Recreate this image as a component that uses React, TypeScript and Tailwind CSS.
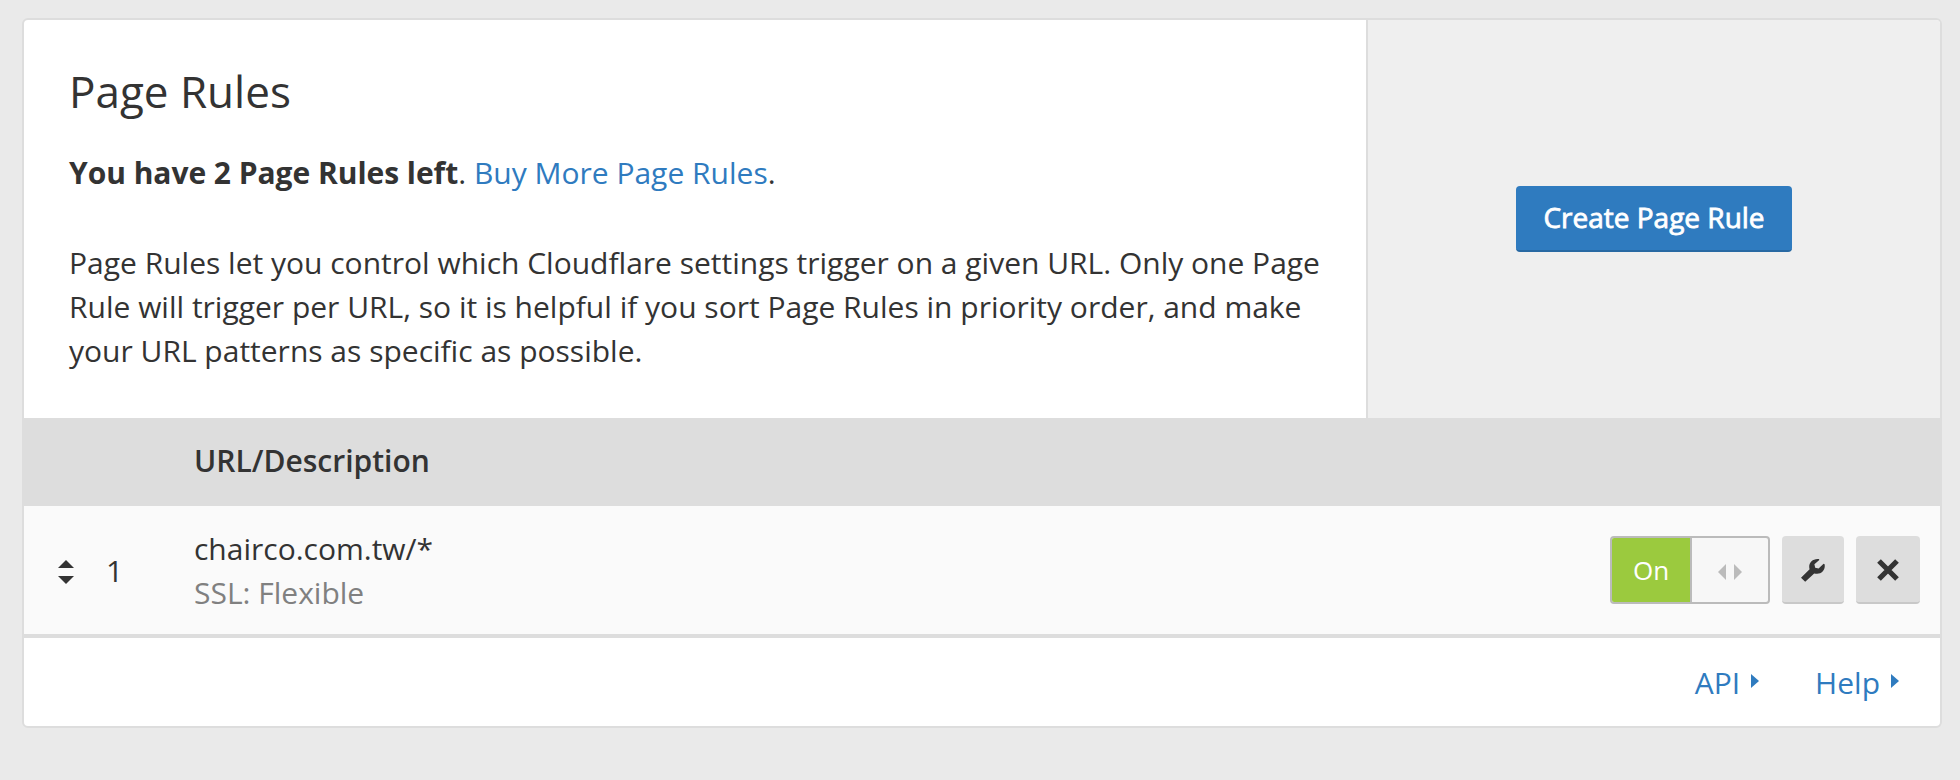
export default function App() {
  return (
    <div className="h-[780px] w-[1960px] overflow-hidden bg-[#eaeaea] px-[22px] pt-[18px] font-['Open_Sans',sans-serif] text-[30px] leading-[44px] text-[#333333]">
      <section className="flex h-[710px] w-[1920px] flex-col overflow-hidden rounded-[6px] border-2 border-[#dddddd] bg-white">
        <div className="flex h-[398px]">
          <div className="w-[1344px] border-r-2 border-[#dddddd] px-[45px] pt-[46px]">
            <h1 className="mb-[35px] text-[44px] leading-[50px]">Page Rules</h1>
            <p className="mb-[46px]">
              <strong className="font-bold tracking-[-0.04px]">You have 2 Page Rules left</strong>.{" "}
              <a className="text-[#2f7bbf]">Buy More Page Rules</a>.
            </p>
            <p>
              Page Rules let you control which Cloudflare settings trigger on a given URL. Only one Page Rule will
              trigger per URL, so it is helpful if you sort Page Rules in priority order, and make your URL patterns
              as specific as possible.
            </p>
          </div>
          <div className="flex flex-1 items-center justify-center bg-[#efefef]">
            <button className="h-[66px] w-[276px] rounded-[4px] border-b-2 border-[#2869a3] bg-[#2f7bbf] pb-[2px] text-[28px] leading-[44px] text-white [-webkit-text-stroke:0.8px_white]">
              Create Page Rule
            </button>
          </div>
        </div>
        <div className="flex h-[88px] items-center bg-[#dddddd] pb-[2px] pl-[170px] font-semibold">URL/Description</div>
        <div className="flex h-[132px] items-center border-b-4 border-[#dddddd] bg-[#fafafa] pr-[20px]">
          <svg className="mt-[4px] ml-[34px]" width="16" height="24" viewBox="0 0 16 24" fill="#333333">
            <path d="M0 8 8 0l8 8zM0 16h16l-8 8z" />
          </svg>
          <span className="ml-[32px] w-[88px] pt-[2px]">1</span>
          <div className="flex-1 pt-[2px]">
            <div>chairco.com.tw/*</div>
            <div className="text-[#808080]">SSL: Flexible</div>
          </div>
          <div className="flex h-[68px] w-[160px] overflow-hidden rounded-[4px] border-2 border-[#bbbbbb] bg-[#f7f7f7]">
            <div className="flex w-[80px] items-center justify-center border-r-2 border-[#bbbbbb] bg-[#9bca3e] text-[26px] text-white">
              On
            </div>
            <div className="flex flex-1 items-center justify-center pt-[4px]">
              <svg width="24" height="16" viewBox="0 0 24 16" fill="#bbbbbb">
                <path d="M8 0v16L0 8zM16 0v16l8-8z" />
              </svg>
            </div>
          </div>
          <button className="ml-[12px] flex h-[68px] w-[62px] items-center justify-center rounded-[4px] border-b-2 border-[#c8c8c8] bg-[#dddddd] pt-[2px]">
            <svg width="24" height="24" viewBox="0 0 24 24" fill="#333333">
              <path d="M0 19.800 8.600 11.200C6.800 5.500 11.500 0 18 1L18.300 1.900 13.400 6.200 14.200 9.800 17.600 10.600 22.600 5.800 23.600 6.300C24.800 12 20 17.400 13.200 15.400L4.200 23.800Z" />
            </svg>
          </button>
          <button className="ml-[12px] flex h-[68px] w-[64px] items-center justify-center rounded-[4px] border-b-2 border-[#c8c8c8] bg-[#dddddd] pt-[2px]">
            <svg width="22" height="22" viewBox="0 0 22 22" stroke="#333333" strokeWidth="5.2">
              <path d="m2 2 18 18M20 2 2 20" />
            </svg>
          </button>
        </div>
        <div className="flex h-[88px] items-center justify-end pt-[2px] pr-[41px] text-[#2f7bbf]">
          <a className="flex items-center">
            API
            <svg className="mb-[4px] ml-[11px]" width="8" height="14" viewBox="0 0 8 14" fill="currentColor">
              <path d="M0 0v14l8-7z" />
            </svg>
          </a>
          <a className="ml-[56px] flex items-center">
            Help
            <svg className="mb-[4px] ml-[11px]" width="8" height="14" viewBox="0 0 8 14" fill="currentColor">
              <path d="M0 0v14l8-7z" />
            </svg>
          </a>
        </div>
      </section>
    </div>
  );
}
